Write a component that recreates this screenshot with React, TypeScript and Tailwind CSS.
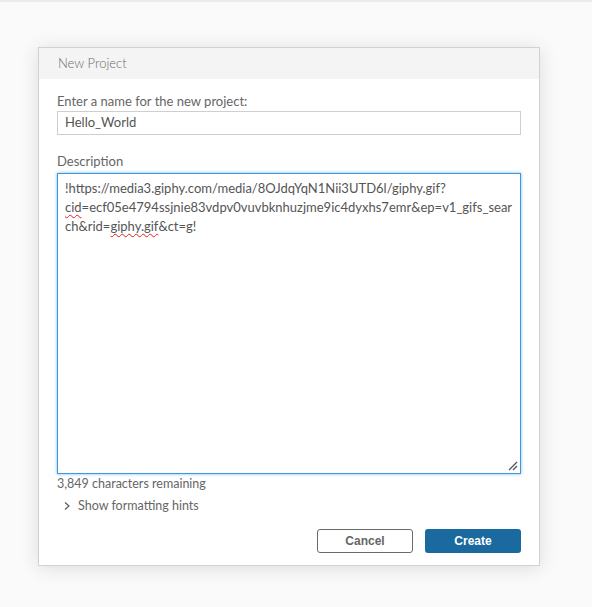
import React from "react";

export default function App() {
  return (
    <div
      className="w-[592px] h-[607px] bg-[#fafafa] border-t-2 border-[#ebebeb] overflow-hidden"
      style={{ fontFamily: "Lato, 'Open Sans', sans-serif" }}
    >
      <div className="ml-[38px] mt-[45px] w-[502px] h-[519px] bg-white border border-[#d2d2d2] shadow-[0_2px_18px_rgba(0,0,0,0.12)] flex flex-col">
        <div className="h-[31px] bg-[#f4f4f4] flex items-center pl-[19px] text-[13px] text-[#6b6b6b] font-light">
          New Project
        </div>
        <div className="flex flex-col px-[18px] pt-[14px]">
          <label className="text-[13px] leading-[16px] text-[#666]">Enter a name for the new project:</label>
          <div className="mt-[2px] h-[24px] border border-[#cfcfcf] flex items-center px-[7px] text-[13px] text-[#555]">
            Hello_World
          </div>
          <label className="mt-[18px] text-[13px] leading-[16px] text-[#666]">Description</label>
          <div className="relative mt-[4px] h-[301px] border border-[#3d98e0] shadow-[0_0_3px_rgba(61,152,224,0.7)] px-[7px] pt-[5px] text-[13px] leading-[19px] text-[#555] whitespace-pre">
            <div>!https://media3.giphy.com/media/8OJdqYqN1Nii3UTD6l/giphy.gif?</div>
            <div>
              <span className="underline decoration-wavy decoration-[#e02020] decoration-1 underline-offset-2">cid</span>=ecf05e4794ssjnie83vdpv0vuvbknhuzjme9ic4dyxhs7emr&amp;ep=v1_gifs_sear
            </div>
            <div>
              ch&amp;rid=<span className="underline decoration-wavy decoration-[#e02020] decoration-1 underline-offset-2">giphy.gif</span>&amp;ct=g!
            </div>
            <svg className="absolute right-[2px] bottom-[2px]" width="10" height="10" viewBox="0 0 10 10">
              <line x1="1" y1="9" x2="9" y2="1" stroke="#555" strokeWidth="1.2" />
              <line x1="5" y1="9" x2="9" y2="5" stroke="#555" strokeWidth="1.2" />
            </svg>
          </div>
          <div className="mt-[2px] text-[12.5px] leading-[16px] text-[#666]">3,849 characters remaining</div>
          <div className="mt-[6px] flex items-center text-[12.5px] leading-[16px] text-[#666]">
            <svg className="ml-[6px]" width="8" height="10" viewBox="0 0 8 10">
              <polyline points="2,1.5 6,5 2,8.5" fill="none" stroke="#555" strokeWidth="1.1" />
            </svg>
            <span className="ml-[7px]">Show formatting hints</span>
          </div>
          <div className="mt-[15px] flex justify-end gap-[12px]" style={{ fontFamily: "'Liberation Sans', Arial, sans-serif" }}>
            <button className="w-[96px] h-[24px] border border-[#6a6a6a] rounded-[3px] bg-white text-[12px] font-bold text-[#666]">
              Cancel
            </button>
            <button className="w-[96px] h-[24px] rounded-[3px] bg-[#1a6aa0] text-[12px] font-bold text-white">
              Create
            </button>
          </div>
        </div>
      </div>
    </div>
  );
}
